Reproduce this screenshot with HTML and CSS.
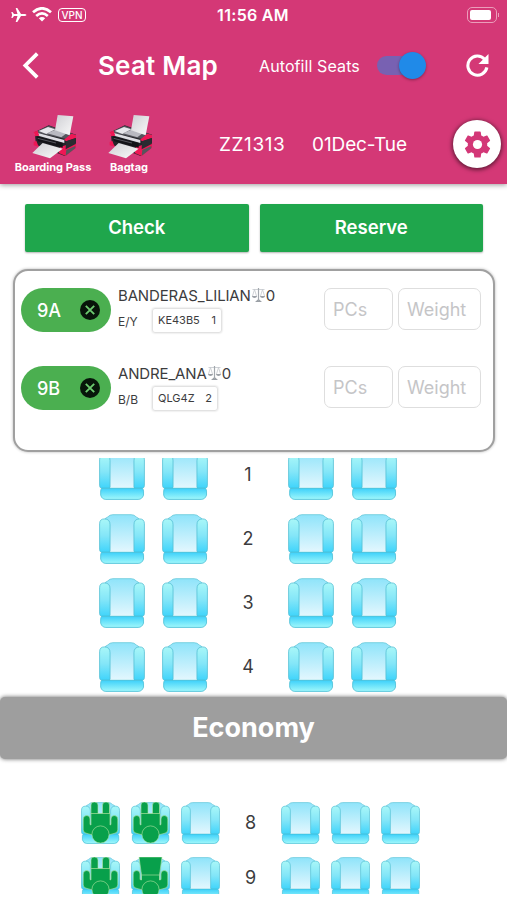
FILE: index.html
```html
<!DOCTYPE html>
<html lang="en">
<head>
  <meta charset="UTF-8">
  <meta name="viewport" content="width=device-width, initial-scale=1.0">
  <title>Seat Map</title>
  <link rel="stylesheet" href="styles.css">
</head>
<body>

  <!-- Shared icons -->
  <svg class="sprite" width="0" height="0">
    <defs>
      <linearGradient id="armFill" x1="0" y1="0" x2="0" y2="1">
        <stop offset="0" stop-color="#a9f7f8"/>
        <stop offset="0.5" stop-color="#84e6f8"/>
        <stop offset="1" stop-color="#3fd4fb"/>
      </linearGradient>
      <linearGradient id="backFill" x1="0" y1="0" x2="0" y2="1">
        <stop offset="0" stop-color="#8fe4fa"/>
        <stop offset="1" stop-color="#e4f7fe"/>
      </linearGradient>
      <linearGradient id="frontFill" x1="0" y1="0" x2="0" y2="1">
        <stop offset="0" stop-color="#3dd0fa"/>
        <stop offset="1" stop-color="#a0f8fb"/>
      </linearGradient>
      <linearGradient id="paperFill" x1="0" y1="0" x2="1" y2="1">
        <stop offset="0" stop-color="#cfcfd4"/>
        <stop offset="1" stop-color="#fafafa"/>
      </linearGradient>
    </defs>
    <symbol id="seat" viewBox="0 0 47 51" preserveAspectRatio="none">
      <path d="M6 10 L6 5 Q7 4 9 3 Q11 .7 14 .7 H33 Q36 .7 38 3 Q40 4 41 5 V10 L36 39 H11 Z" fill="url(#backFill)" stroke="#62c6d8" stroke-width=".8"/>
      <path d="M.6 10 Q.6 5 5.5 5 Q11.3 5 11.3 11 V39 H2 Q.6 38 .6 36 Z" fill="url(#armFill)" stroke="#53bfd3" stroke-width=".8"/>
      <path d="M46.4 10 Q46.4 5 41.5 5 Q35.7 5 35.7 11 V39 H45 Q46.4 38 46.4 36 Z" fill="url(#armFill)" stroke="#53bfd3" stroke-width=".8"/>
      <path d="M11.5 38.4 H35.5" stroke="#f4fdff" stroke-width="1"/>
      <path d="M3 39 H44 Q45.5 40 45.5 42 V46 Q44 50.4 40 50.4 H7 Q3 50.4 1.7 46 V42 Q1.7 40 3 39 Z" fill="url(#frontFill)" stroke="#45bdd4" stroke-width=".8"/>
    </symbol>
    <symbol id="adult" viewBox="0 0 39 42">
      <g fill="#08a04b" stroke="#b9e6a4" stroke-width=".6">
        <path d="M10 12 V3 Q10 0 13.3 0 Q17 0 17 3 V12 Z M21.500 12 V3 Q21.500 0 25 0 Q28.500 0 28.500 3 V12 Z"/>
        <path d="M10 11.500 H29 V23 L30 22.500 V17 Q30 13.500 33.200 13.500 Q36.800 13.500 36.800 17 V28 Q36.500 31 33 31.500 L27 33 H12 L6 31.500 Q2.500 31 2.200 28 V17 Q2.200 13.500 5.800 13.500 Q9 13.500 9 17 V22.500 L10 23 Z"/>
        <circle cx="19.500" cy="32.500" r="8.600"/>
      </g>
    </symbol>
    <symbol id="skirt" viewBox="0 0 39 42">
      <g fill="#08a04b" stroke="#b9e6a4" stroke-width=".6">
        <path d="M8 0 H31 L28.500 18 V23 L30 22.500 V17 Q30 13.500 33.200 13.500 Q36.800 13.500 36.800 17 V28 Q36.500 31 33 31.500 L27 33 H12 L6 31.500 Q2.500 31 2.200 28 V17 Q2.200 13.500 5.800 13.500 Q9 13.500 9 17 V22.500 L10.500 23 V18 Z"/>
        <path d="M11 18 H28"/>
        <circle cx="19.500" cy="32.500" r="8.600"/>
      </g>
    </symbol>
    <symbol id="printer" viewBox="0 0 135 135">
      <path d="M8 55 L50 34 L132 62 V98 L98 126 L12 92 Z" fill="#24242a"/>
      <path d="M8 55 L50 35 L96 52 L130 62 L102 75 Z" fill="#55555d"/>
      <path d="M20 51 L48 39 L70 46 L43 60 Z" fill="#e7e7ec"/>
      <path d="M45 58 L70 47 L104 58 L88 70 Z" fill="#b9b9c1"/>
      <path d="M77 3 L124 7 L113 64 L69 49 Z" fill="url(#paperFill)"/>
      <path d="M7 54 L97 78 V87 L8 62 Z" fill="#dedee4"/>
      <path d="M5 54 L17 50 L22 65 L9 67 Z M118 59 L132 63 V72 L103 82 L96 77 Z" fill="#ee1755"/>
      <path d="M5 84 L13 80 L20 98 L5 94 Z M84 99 L105 92 L132 88 V101 L101 126 L80 117 Z" fill="#ee1755"/>
      <path d="M102 82 L131 72 V90 L101 106 Z" fill="#2b2b31"/>
      <path d="M103 108 L130 96 V103 L101 125 Z" fill="#56565d"/>
      <path d="M14 67 L92 87 V101 L18 82 Z" fill="#131318"/>
      <path d="M17 73 L72 87" stroke="#777780" stroke-width="2"/>
      <path d="M32 87 L92 104 L54 133 L1 117 Z" fill="url(#paperFill)"/>
    </symbol>
    <symbol id="scale" viewBox="0 0 14 16">
      <path d="M7 1 V13 M1 2.500 H13 M3 2.500 L1 9 M3 2.500 L5 9 M11 2.500 L9 9 M11 2.500 L13 9" fill="none" stroke="#c3c7cb" stroke-width=".8"/>
      <path d="M.3 9 H5.700 Q5 11 3 11 Q1 11 .3 9 Z M8.300 9 H13.700 Q13 11 11 11 Q9 11 8.300 9 Z M3.500 15 L6.300 12.500 H7.700 L10.500 15 Z" fill="#9a9fa5"/>
      <path d="M7 1 V14" stroke="#a3a8ae" stroke-width="1.200"/>
    </symbol>
    <symbol id="remove" viewBox="0 0 20 20">
      <circle cx="10" cy="10" r="10" fill="#07150a"/>
      <path d="M5.800 5.800 L14.200 14.200 M14.200 5.800 L5.800 14.200" stroke="#6cc96f" stroke-width="1.900"/>
    </symbol>
  </svg>

  <header class="header">
    <div class="status-bar">
      <div class="status-left">
        <svg class="plane" viewBox="0 0 16 14"><path d="M15.500 7 Q15.200 6 13.500 6 H10 L6.300 0 H4.700 L6.500 6 H3 L1.500 4 H.3 L1.200 7 L.3 10 H1.500 L3 8 H6.500 L4.700 14 H6.300 L10 8 H13.500 Q15.200 8 15.500 7 Z" fill="#fff"/></svg>
        <svg class="wifi" viewBox="0 0 20 15"><g fill="none" stroke="#fff" stroke-width="2.700"><path d="M1 5.300 Q10 -2.700 19 5.300"/><path d="M4.200 8.900 Q10 3.700 15.800 8.900"/></g><path d="M6.800 11.200 Q10 8.600 13.200 11.200 L10 14.500 Z" fill="#fff"/></svg>
        <span class="vpn">VPN</span>
      </div>
      <span class="time">11:56 AM</span>
      <div class="battery"><div class="battery-level"></div></div>
    </div>

    <div class="nav-bar">
      <svg class="back" viewBox="0 0 16 26"><path d="M14.500 1.500 L3 13 L14.500 24.500" fill="none" stroke="#fff" stroke-width="3.600"/></svg>
      <h1>Seat Map</h1>
      <span class="autofill">Autofill Seats</span>
      <div class="switch"><div class="switch-thumb"></div></div>
      <svg class="refresh" viewBox="0 0 24 24"><path d="M19.500 5.500 A10 10 0 1 0 21.800 14" fill="none" stroke="#fff" stroke-width="3.200"/><path d="M23.500 0 V10.500 H13 Z" fill="#fff"/></svg>
    </div>

    <div class="tool-bar">
      <div class="print-button boarding">
        <svg><use href="#printer"/></svg>
        <span>Boarding Pass</span>
      </div>
      <div class="print-button bagtag">
        <svg><use href="#printer"/></svg>
        <span>Bagtag</span>
      </div>
      <span class="flight">ZZ1313</span>
      <span class="date">01Dec-Tue</span>
      <div class="settings">
        <svg viewBox="2 2 20 20"><path fill="#d33777" d="M19.140 12.940c.04-.3.06-.61.06-.94 0-.32-.02-.64-.07-.94l2.030-1.580c.18-.14.23-.41.12-.61l-1.920-3.320c-.12-.22-.37-.29-.59-.22l-2.390.96c-.5-.38-1.030-.7-1.620-.94l-.36-2.540c-.04-.24-.24-.41-.48-.41h-3.840c-.24 0-.43.17-.47.41l-.36 2.540c-.59.24-1.130.57-1.620.94l-2.390-.96c-.22-.08-.47 0-.59.22L2.740 8.870c-.12.21-.08.47.12.61l2.030 1.580c-.05.3-.09.63-.09.94s.02.64.07.94l-2.030 1.580c-.18.14-.23.41-.12.61l1.920 3.320c.12.22.37.29.59.22l2.390-.96c.5.38 1.030.7 1.620.94l.36 2.540c.05.24.24.41.48.41h3.840c.24 0 .44-.17.47-.41l.36-2.540c.59-.24 1.130-.56 1.620-.94l2.390.96c.22.08.47 0 .59-.22l1.920-3.320c.12-.22.07-.47-.12-.61l-2.010-1.580z"/><circle cx="12" cy="12" r="3.400" fill="#fff"/></svg>
      </div>
    </div>
  </header>

  <div class="actions">
    <button>Check</button>
    <button>Reserve</button>
  </div>

  <section class="passengers">
    <div class="passenger">
      <div class="seat-chip"><span>9A</span><svg><use href="#remove"/></svg></div>
      <div class="details">
        <div class="name">BANDERAS_LILIAN<svg><use href="#scale"/></svg>0</div>
        <div class="booking">
          <span class="cabin">E/Y</span>
          <span class="pnr">KE43B5<b>1</b></span>
        </div>
      </div>
      <input class="pcs" type="text" placeholder="PCs">
      <input class="weight" type="text" placeholder="Weight">
    </div>
    <div class="passenger">
      <div class="seat-chip"><span>9B</span><svg><use href="#remove"/></svg></div>
      <div class="details">
        <div class="name">ANDRE_ANA<svg><use href="#scale"/></svg>0</div>
        <div class="booking">
          <span class="cabin">B/B</span>
          <span class="pnr second">QLG4Z<b>2</b></span>
        </div>
      </div>
      <input class="pcs" type="text" placeholder="PCs">
      <input class="weight" type="text" placeholder="Weight">
    </div>
  </section>

  <section class="cabin-map business">
    <div class="row">
      <svg><use href="#seat"/></svg><svg><use href="#seat"/></svg>
      <span>1</span>
      <svg><use href="#seat"/></svg><svg><use href="#seat"/></svg>
    </div>
    <div class="row">
      <svg><use href="#seat"/></svg><svg><use href="#seat"/></svg>
      <span>2</span>
      <svg><use href="#seat"/></svg><svg><use href="#seat"/></svg>
    </div>
    <div class="row">
      <svg><use href="#seat"/></svg><svg><use href="#seat"/></svg>
      <span>3</span>
      <svg><use href="#seat"/></svg><svg><use href="#seat"/></svg>
    </div>
    <div class="row">
      <svg><use href="#seat"/></svg><svg><use href="#seat"/></svg>
      <span>4</span>
      <svg><use href="#seat"/></svg><svg><use href="#seat"/></svg>
    </div>
  </section>

  <h2 class="cabin-title">Economy</h2>

  <section class="cabin-map economy">
    <div class="row">
      <svg><use href="#seat"/><use href="#adult"/></svg><svg><use href="#seat"/><use href="#adult"/></svg><svg><use href="#seat"/></svg>
      <span>8</span>
      <svg><use href="#seat"/></svg><svg><use href="#seat"/></svg><svg><use href="#seat"/></svg>
    </div>
    <div class="row">
      <svg><use href="#seat"/><use href="#adult"/></svg><svg><use href="#seat"/><use href="#skirt"/></svg><svg><use href="#seat"/></svg>
      <span>9</span>
      <svg><use href="#seat"/></svg><svg><use href="#seat"/></svg><svg><use href="#seat"/></svg>
    </div>
  </section>

</body>
</html>
```
FILE: styles.css
```css
* {
  box-sizing: border-box;
}

body {
  margin: 0;
  height: 900px;
  overflow: hidden;
  background: #fff;
  font-family: Inter, 'Liberation Sans', sans-serif;
  color: #3c3c3e;
}

svg {
  display: block;
  flex: none;
}

.sprite {
  position: absolute;
}

.header {
  height: 184px;
  background: #d43876;
  color: #fff;
  box-shadow: 0 1px 5px rgba(0, 0, 0, 0.4);
}

.header span, .header h1 {
  white-space: nowrap;
}

/* Status bar */
.status-bar {
  display: grid;
  grid-template-columns: 1fr auto 1fr;
  align-items: center;
  height: 29px;
  padding: 0 8px 0 11px;
}

.status-left {
  display: flex;
  align-items: center;
}

.plane {
  width: 16px;
  height: 14px;
}

.wifi {
  width: 20px;
  height: 15px;
  margin-left: 5px;
}

.vpn {
  width: 28px;
  height: 14px;
  margin-left: 6px;
  border: 1px solid #fff;
  border-radius: 4px;
  font-size: 10px;
  font-weight: 500;
  line-height: 13px;
  text-align: center;
}

.time {
  margin-right: 4px;
  font-size: 16px;
  font-weight: 600;
  letter-spacing: 0.3px;
}

.battery {
  position: relative;
  justify-self: end;
  width: 30px;
  height: 16px;
  margin-right: 2px;
  padding: 2px;
  border: 1px solid #eb9dba;
  border-radius: 5px;
}

.battery::after {
  content: '';
  position: absolute;
  top: 5px;
  right: -3px;
  width: 1px;
  height: 4px;
  background: #eb9dba;
}

.battery-level {
  width: 21px;
  height: 10px;
  border-radius: 2px;
  background: #fff;
}

/* Navigation */
.nav-bar {
  display: flex;
  align-items: center;
  height: 73px;
  padding-left: 22px;
}

.back {
  width: 17px;
  height: 27px;
}

h1 {
  width: 122px;
  margin: 0 0 0 59px;
  font-size: 26px;
  font-weight: 600;
  letter-spacing: 0.2px;
}

.autofill {
  width: 101px;
  margin-left: 39px;
  font-size: 16px;
  letter-spacing: 0.1px;
}

.switch {
  display: flex;
  align-items: center;
  width: 46px;
  height: 19px;
  margin-left: 17px;
  border-radius: 10px;
  background: #7861b2;
}

.switch-thumb {
  width: 27px;
  height: 27px;
  margin-left: 22px;
  flex: none;
  border-radius: 50%;
  background: #208ae8;
  box-shadow: 0 1px 3px rgba(0, 0, 0, 0.35);
}

.refresh {
  width: 23px;
  height: 23px;
  margin-left: 43px;
}

/* Printing and flight */
.tool-bar {
  display: flex;
  align-items: center;
  height: 84px;
}

.print-button {
  display: flex;
  flex-direction: column;
  align-items: center;
  gap: 1px;
  font-size: 11px;
  font-weight: 700;
}

.print-button svg {
  width: 45px;
  height: 45px;
}

.print-button span {
  line-height: 14px;
}

.boarding {
  width: 78px;
  margin-left: 14px;
}

.bagtag {
  width: 48px;
  margin-left: 13px;
}

.bagtag svg {
  margin-left: 3px;
}

.boarding svg {
  margin-left: 3px;
}

.flight {
  width: 67px;
  margin-left: 66px;
  font-size: 19px;
  letter-spacing: 0.6px;
}

.date {
  width: 96px;
  margin-left: 26px;
  font-size: 19px;
  letter-spacing: -0.1px;
}

.settings {
  display: flex;
  align-items: center;
  justify-content: center;
  width: 48px;
  height: 48px;
  margin-left: 45px;
  border-radius: 50%;
  background: #fff;
  box-shadow: 0 1px 4px 1px rgba(0, 0, 0, 0.55);
}

.settings svg {
  width: 27px;
  height: 27px;
}

/* Buttons */
.actions {
  display: flex;
  gap: 11px;
  padding: 20px 24px 0 25px;
}

.actions button {
  flex: 1;
  height: 48px;
  padding: 0 0 2px;
  border: none;
  border-radius: 2px;
  background: #1fa64c;
  color: #fff;
  font-family: inherit;
  font-size: 18.5px;
  font-weight: 600;
  box-shadow: 0 1px 2px rgba(0, 0, 0, 0.3);
}

/* Passengers */
.passengers {
  height: 183px;
  margin: 17px 12px 0 13px;
  padding: 15px 12px 0 6px;
  border: 2px solid #a0a0a0;
  border-radius: 15px;
  background: #fff;
  box-shadow: 0 0 3px rgba(0, 0, 0, 0.3);
}

.passenger {
  display: flex;
  align-items: flex-start;
  height: 78px;
}

.seat-chip {
  display: flex;
  align-items: center;
  width: 90px;
  height: 44px;
  margin-top: 2px;
  padding-left: 16px;
  border-radius: 22px;
  background: #4baf50;
  color: #fff;
  font-size: 18px;
  font-weight: 500;
  flex: none;
}

.seat-chip span {
  width: 43px;
}

.seat-chip svg {
  width: 20px;
  height: 20px;
}

.details {
  width: 213px;
  padding-left: 7px;
  flex: none;
}

.name {
  display: flex;
  align-items: center;
  height: 18px;
  font-size: 15px;
  letter-spacing: -0.15px;
}

.name svg {
  width: 15px;
  height: 16px;
}

.booking {
  display: flex;
  height: 28px;
}

.cabin {
  width: 34px;
  padding-top: 10px;
  font-size: 12px;
  line-height: 15px;
}

.pnr {
  display: flex;
  justify-content: space-between;
  width: 70px;
  height: 25px;
  margin-top: 4px;
  padding: 0 5px 0 5px;
  border: 1px solid #e2e2e2;
  border-radius: 3px;
  box-shadow: 0 0 2px rgba(0, 0, 0, 0.2);
  font-size: 11px;
  line-height: 22px;
  flex: none;
}

.pnr b {
  font-weight: 400;
}

.pnr.second {
  width: 66px;
}

.passenger input {
  height: 42px;
  margin-top: 2px;
  padding: 0 0 0 8px;
  border: 1px solid #dedede;
  border-radius: 7px;
  background: #fff;
  font-family: inherit;
  font-size: 18px;
  flex: none;
}

.passenger input::placeholder {
  color: #c5c5c7;
}

.pcs {
  width: 69px;
}

.weight {
  width: 83px;
  margin-left: 5px;
}

/* Seat rows */
.cabin-map {
  overflow: hidden;
}

.row {
  display: flex;
  align-items: center;
}

.row span {
  padding-bottom: 2px;
  text-align: center;
  font-size: 18px;
}

.business {
  height: 234px;
  margin-top: 6px;
  padding-left: 99px;
}

.business .row {
  height: 50px;
  margin-bottom: 14px;
  gap: 17px;
}

.business .row:first-child {
  margin-top: -8px;
}

.business svg {
  width: 46px;
  height: 50px;
}

.business span {
  width: 46px;
}

.cabin-title {
  height: 62px;
  margin: 5px 0 0;
  border-radius: 5px;
  background: #9e9e9e;
  box-shadow: 0 0 4px rgba(0, 0, 0, 0.6);
  color: #fff;
  font-size: 27px;
  font-weight: 700;
  line-height: 62px;
  text-align: center;
}

.economy {
  height: 92px;
  margin-top: 43px;
  padding-left: 81px;
}

.economy .row {
  height: 42px;
  margin-bottom: 13px;
  gap: 11px;
}

.economy svg {
  width: 39px;
  height: 42px;
}

.economy span {
  width: 39px;
}
```
